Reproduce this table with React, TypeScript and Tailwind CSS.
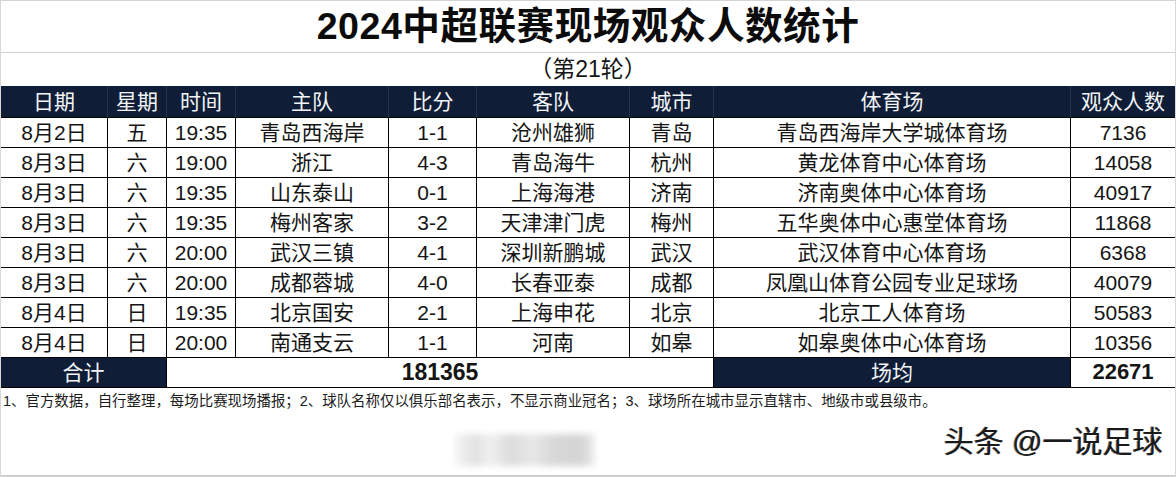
import React from "react";

type Match = {
  date: string;
  day: string;
  time: string;
  home: string;
  score: string;
  away: string;
  city: string;
  stadium: string;
  crowd: string;
};

const matches: Match[] = [
  { date: "8月2日", day: "五", time: "19:35", home: "青岛西海岸", score: "1-1", away: "沧州雄狮", city: "青岛", stadium: "青岛西海岸大学城体育场", crowd: "7136" },
  { date: "8月3日", day: "六", time: "19:00", home: "浙江", score: "4-3", away: "青岛海牛", city: "杭州", stadium: "黄龙体育中心体育场", crowd: "14058" },
  { date: "8月3日", day: "六", time: "19:35", home: "山东泰山", score: "0-1", away: "上海海港", city: "济南", stadium: "济南奥体中心体育场", crowd: "40917" },
  { date: "8月3日", day: "六", time: "19:35", home: "梅州客家", score: "3-2", away: "天津津门虎", city: "梅州", stadium: "五华奥体中心惠堂体育场", crowd: "11868" },
  { date: "8月3日", day: "六", time: "20:00", home: "武汉三镇", score: "4-1", away: "深圳新鹏城", city: "武汉", stadium: "武汉体育中心体育场", crowd: "6368" },
  { date: "8月3日", day: "六", time: "20:00", home: "成都蓉城", score: "4-0", away: "长春亚泰", city: "成都", stadium: "凤凰山体育公园专业足球场", crowd: "40079" },
  { date: "8月4日", day: "日", time: "19:35", home: "北京国安", score: "2-1", away: "上海申花", city: "北京", stadium: "北京工人体育场", crowd: "50583" },
  { date: "8月4日", day: "日", time: "20:00", home: "南通支云", score: "1-1", away: "河南", city: "如皋", stadium: "如皋奥体中心体育场", crowd: "10356" },
];

const headers = ["日期", "星期", "时间", "主队", "比分", "客队", "城市", "体育场", "观众人数"];
const widths = ["w-[107px]", "w-[59px]", "w-[69px]", "w-[153px]", "w-[88px]", "w-[153px]", "w-[84px]", "w-[357px]", "w-[105px]"];

const font = "font-['Liberation_Sans','Noto_Sans_CJK_SC',sans-serif]";

export default function App() {
  return (
    <div className={`relative w-[1176px] h-[477px] overflow-hidden bg-white ${font} text-[#151515]`}>
      <div className="border border-[#d4d4d4] border-b-0 w-[1176px]">
        <div className="h-[52px] flex items-center justify-center border-b border-[#cfcfcf]">
          <h1 className="text-[37.6px] font-bold leading-none tracking-[0.5px] text-[#0b0b0b]">2024中超联赛现场观众人数统计</h1>
        </div>
        <div className="h-[33px] flex items-center justify-center text-[23px] leading-none">（第21轮）</div>
      </div>

      <table className="table-fixed border-collapse w-[1175px] text-[21px] leading-none">
        <colgroup>
          {widths.map((w, i) => (
            <col key={i} className={w} />
          ))}
        </colgroup>
        <thead>
          <tr className="h-[31px] bg-[#0f1e36] text-[#f2f4f8]">
            {headers.map((h) => (
              <th key={h} className="font-normal text-center border-x border-[#22324b]">{h}</th>
            ))}
          </tr>
        </thead>
        <tbody>
          {matches.map((m, i) => (
            <tr key={i} className="h-[30px] text-center">
              <td className="border border-black">{m.date}</td>
              <td className="border border-black">{m.day}</td>
              <td className="border border-black">{m.time}</td>
              <td className="border border-black">{m.home}</td>
              <td className="border border-black">{m.score}</td>
              <td className="border border-black">{m.away}</td>
              <td className="border border-black">{m.city}</td>
              <td className="border border-black">{m.stadium}</td>
              <td className="border border-black">{m.crowd}</td>
            </tr>
          ))}
          <tr className="h-[30px] text-center">
            <td colSpan={2} className="bg-[#0f1e36] text-[#f2f4f8] border border-black">合计</td>
            <td colSpan={5} className="font-bold text-[23px] border border-black border-r-0">181365</td>
            <td className="bg-[#0f1e36] text-[#f2f4f8] border border-black">场均</td>
            <td className="font-bold text-[22px] border border-black">22671</td>
          </tr>
        </tbody>
      </table>

      <p className="pl-[3px] pt-[4px] text-[14.45px] leading-[18px] text-[#1c1c1c] whitespace-nowrap">
        1、官方数据，自行整理，每场比赛现场播报；2、球队名称仅以俱乐部名表示，不显示商业冠名；3、球场所在城市显示直辖市、地级市或县级市。
      </p>

      <div className="absolute left-[455px] top-[434px] w-[140px] h-[32px] blur-[3px] bg-[linear-gradient(90deg,#f4f4f4_0%,#e2e2e2_15%,#f0f0f0_25%,#dcdcdc_40%,#e8e8e8_55%,#d8d8d8_70%,#d4d4d4_90%,#eeeeee_100%)]" />

      <div className="absolute left-[944px] top-[427px] text-[30px] leading-none text-[#1a1a1a] whitespace-nowrap [text-shadow:1px_1px_0_#ffffff,-1px_0_0_#666666]">
        头条 @一说足球
      </div>

      <div className="absolute left-0 right-0 bottom-0 h-[2px] bg-[#cfcfcf]" />
      <div className="absolute right-0 top-0 bottom-0 w-px bg-[#d8d8d8]" />
      <div className="absolute left-0 top-0 bottom-0 w-px bg-[#d8d8d8]" />
    </div>
  );
}
